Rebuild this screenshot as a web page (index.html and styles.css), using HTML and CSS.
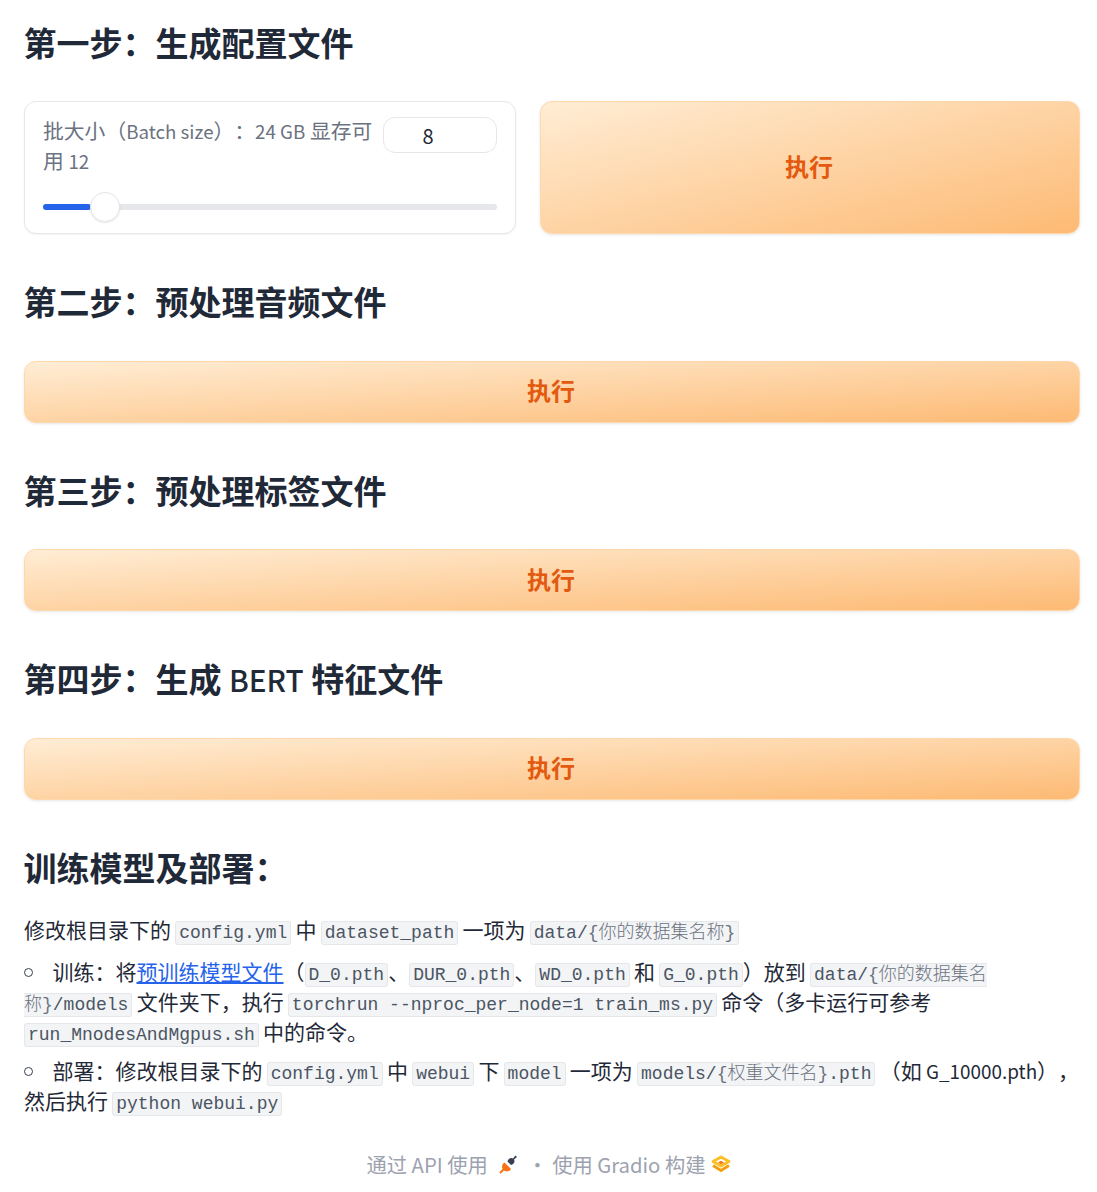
FILE: index.html
```html
<!DOCTYPE html>
<html lang="zh">
<head>
    <meta charset="UTF-8">
    <title>Gradio</title>
    <link rel="stylesheet" href="styles.css">
</head>
<body>
    <main class="container">
        <!-- Step 1 -->
        <h2 class="step-title step-first">第一步：生成配置文件</h2>
        <div class="step-row">
            <div class="slider-card">
                <div class="slider-head">
                    <span class="slider-label">批大小（<span class="latin">Batch size</span>）：<span class="latin">24 GB</span> 显存可用 <span class="latin">12</span></span>
                    <div class="number-box">8</div>
                </div>
                <div class="slider-track">
                    <div class="slider-fill"></div>
                    <div class="slider-thumb"></div>
                </div>
            </div>
            <button class="run-btn run-btn-tall">执行</button>
        </div>

        <!-- Step 2 -->
        <h2 class="step-title">第二步：预处理音频文件</h2>
        <button class="run-btn">执行</button>

        <!-- Step 3 -->
        <h2 class="step-title">第三步：预处理标签文件</h2>
        <button class="run-btn">执行</button>

        <!-- Step 4 -->
        <h2 class="step-title">第四步：生成 <span class="latin title-latin">BERT</span> 特征文件</h2>
        <button class="run-btn">执行</button>

        <!-- Train -->
        <h2 class="step-title">训练模型及部署：</h2>
        <p class="doc-line">修改根目录下的 <code>config.yml</code> 中 <code>dataset_path</code> 一项为 <code>data/<span class="code-cjk">{你的数据集名称}</span></code></p>
        <ul class="doc-list">
            <li>训练：将<a href="#">预训练模型文件</a>（<code>D_0.pth</code>、<code>DUR_0.pth</code>、<code>WD_0.pth</code> 和 <code>G_0.pth</code>）放到 <code>data/<span class="code-cjk">{你的数据集名称}</span>/models</code> 文件夹下，执行 <code>torchrun --nproc_per_node=1 train_ms.py</code> 命令（多卡运行可参考 <code>run_MnodesAndMgpus.sh</code> 中的命令。</li>
            <li>部署：修改根目录下的 <code>config.yml</code> 中 <code>webui</code> 下 <code>model</code> 一项为 <code>models/<span class="code-cjk">{权重文件名}</span>.pth</code> （如 <span class="latin">G_10000.pth</span>），然后执行 <code>python webui.py</code></li>
        </ul>
    </main>

    <footer class="page-footer">
        <span>通过 API 使用</span>
        <svg class="footer-icon" viewBox="0 0 20 20" width="20" height="20">
            <path d="M1.500 18.500L5 15" stroke="#f97316" stroke-width="2" stroke-linecap="round"/>
            <path d="M5.500 8.500l6.500 6.500c-1 2.500-5 3.500-7.500 1s-1.500-6 1-7.500z" fill="#f97316"/>
            <path d="M8.500 7.500c.5-2 2-3.500 4-3.500l1.500.5 2.500-3 1.500 1.500-3 2.500.5 1.500c0 2-1.500 3.500-3.500 4z" fill="#374151"/>
        </svg>
        <span class="footer-dot">·</span>
        <span>使用 Gradio 构建</span>
        <svg class="footer-icon gradio-icon" viewBox="0 0 20 18" width="20" height="18">
            <path d="M10 2L18 6.500 10 11 2 6.500z" fill="none" stroke="#fbbf24" stroke-width="2.800" stroke-linejoin="round"/>
            <path d="M2 10.500L10 15.500 18 10.500" fill="none" stroke="#f59e0b" stroke-width="2.800" stroke-linejoin="round"/>
            <path d="M7 7.500l3-1.700 3 1.700-3 1.700z" fill="#f97316"/>
        </svg>
    </footer>
</body>
</html>
```

FILE: styles.css
```css
body {
    margin: 0;
    font-family: "Noto Sans CJK SC", sans-serif;
    background-color: #fff;
    color: #1f2937;
    text-spacing-trim: space-all;
}

.container {
    padding: 0 17px 0 24px;
}

.step-title {
    margin: 0 0 0 -0.500px;
    padding: 44px 0 36.500px;
    font-size: 33px;
    line-height: 46px;
    font-weight: 700;
}

.step-first {
    padding-top: 18.500px;
}

.latin {
    font-size: 0.900em;
    line-height: 1;
}

.title-latin {
    font-weight: 500;
}

.step-row {
    display: flex;
    gap: 24px;
}

.slider-card {
    box-sizing: border-box;
    width: 492px;
    height: 133px;
    padding: 15px 18px;
    background-color: #fff;
    border: 1px solid #e5e7eb;
    border-radius: 12px;
    box-shadow: 0 1px 2px rgba(0, 0, 0, 0.05);
}

.slider-head {
    display: flex;
    align-items: flex-start;
    gap: 8px;
}

.slider-label {
    flex: 1;
    margin-top: -2px;
    font-size: 20.800px;
    line-height: 30px;
    color: #6b7280;
}

.number-box {
    flex: none;
    width: 114px;
    height: 36px;
    border: 1px solid #e5e7eb;
    border-radius: 12px;
    padding-right: 24px;
    box-sizing: border-box;
    font-size: 20px;
    line-height: 36px;
    text-align: center;
    color: #1f2937;
}

.slider-track {
    position: relative;
    height: 6px;
    margin-top: 29px;
    background-color: #e5e7eb;
    border-radius: 3px;
}

.slider-fill {
    width: 48px;
    height: 6px;
    background-color: #2563eb;
    border-radius: 3px;
}

.slider-thumb {
    position: absolute;
    left: 47px;
    top: -12px;
    width: 30px;
    height: 30px;
    box-sizing: border-box;
    background-color: #fff;
    border: 1px solid #e5e7eb;
    border-radius: 50%;
    box-shadow: 0 1px 2px rgba(0, 0, 0, 0.1);
}

.run-btn {
    display: block;
    width: 100%;
    height: 62px;
    padding: 0 2px 4px 0;
    border: 1px solid #fed7aa;
    border-radius: 12px;
    background: linear-gradient(to bottom right, #ffedd5, #fdba74);
    box-shadow: 0 1px 3px rgba(0, 0, 0, 0.1);
    color: #e2590f;
    font-family: inherit;
    font-size: 24px;
    font-weight: 700;
    cursor: pointer;
}

.run-btn-tall {
    flex: 1;
    width: auto;
    height: 133px;
}

.doc-line {
    margin: -12px 0 12px;
    font-size: 21px;
    line-height: 30px;
    word-spacing: -0.500px;
}

.doc-list {
    margin: 0;
    padding: 0;
    list-style: none;
    font-size: 21px;
    line-height: 30px;
    word-spacing: -0.500px;
}

.doc-list li {
    margin-bottom: 9px;
}

.doc-list li::before {
    content: "";
    display: inline-block;
    box-sizing: border-box;
    width: 9px;
    height: 9px;
    margin-right: 19.500px;
    border: 1.500px solid #374151;
    border-radius: 50%;
    vertical-align: 3px;
}

.doc-list a {
    color: #2563eb;
}

code {
    padding: 1px 3px;
    font-family: "Liberation Mono", "Noto Sans CJK SC", monospace;
    font-size: 18px;
    line-height: 20px;
    word-spacing: 0;
    color: #4b5563;
    background-color: #f3f4f6;
    border: 1px solid #e5e7eb;
    border-radius: 3px;
}

.code-cjk {
    color: #6b7280;
    font-weight: 300;
}

.page-footer {
    display: flex;
    align-items: center;
    justify-content: center;
    margin-top: 24px;
    height: 50px;
    font-size: 20.300px;
    color: #9ca3af;
}

.footer-icon {
    margin-left: 11px;
}

.gradio-icon {
    margin-left: 5px;
}

.footer-dot {
    margin: 0 4.500px 0 8.500px;
}
```
